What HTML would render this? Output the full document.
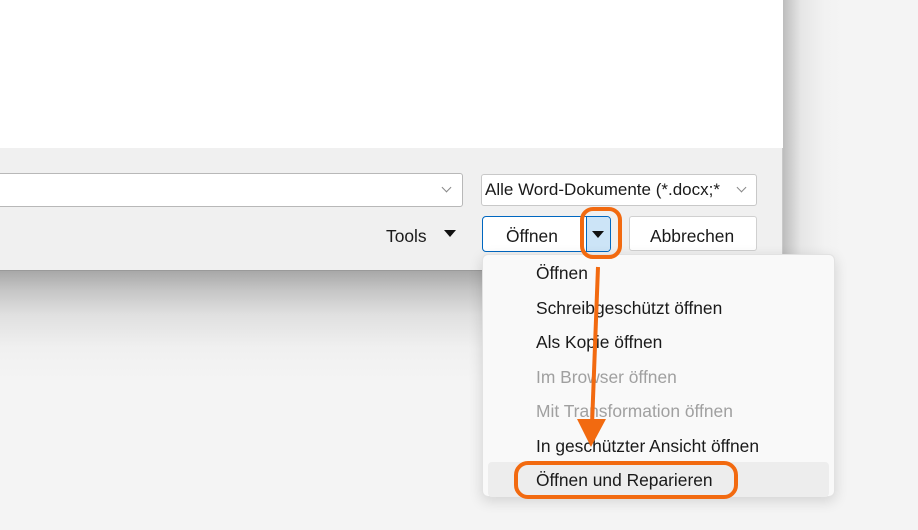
<!DOCTYPE html>
<html><head><meta charset="utf-8"><style>
*{margin:0;padding:0;box-sizing:border-box}
body{width:918px;height:530px;overflow:hidden;background:#f4f4f4;position:relative;font-family:"Liberation Sans",sans-serif;color:#1a1a1a}
.abs{position:absolute}
#shadowR{left:783px;top:0;width:60px;height:290px;background:linear-gradient(90deg,#bdbdbd,#e6e6e6 30%,#f2f2f2 70%,#f4f4f4)}
#shadowB{left:0;top:271px;width:800px;height:110px;background:linear-gradient(180deg,#a8a8a8,#c6c6c6 18%,#e0e0e0 40%,#f0f0f0 70%,#f4f4f4)}
#white{left:0;top:0;width:783px;height:148px;background:#fff}
#footer{left:0;top:148px;width:783px;height:123px;background:#f0f0f0;border-right:1px solid #c9c9c9;border-bottom:1px solid #9a9a9a}
.box{background:#fff;border:1px solid #c8c8c8;border-radius:3px}
.chev{position:absolute;width:7px;height:7px;border-right:1px solid #888;border-bottom:1px solid #888;transform:rotate(45deg)}
.tri{position:absolute;width:0;height:0;border-left:6px solid transparent;border-right:6px solid transparent;border-top:7px solid #111}
.t{position:absolute;font-size:17.4px;white-space:nowrap}
#menu{left:482px;top:254px;width:353px;height:243px;background:#f9f9f9;border:1px solid #e2e2e2;border-radius:6px;box-shadow:0 4px 14px rgba(0,0,0,.14)}
.mi{position:absolute;left:53px;font-size:17.4px;white-space:nowrap}
.dis{color:#a0a0a0}
</style></head><body>
<div class="abs" id="shadowB"></div>
<div class="abs" id="shadowR"></div>
<div class="abs" id="white"></div>
<div class="abs" id="footer"></div>
<div class="abs box" style="left:-4px;top:173px;width:467px;height:34px;border-color:#b8b8b8"><div class="chev" style="left:446px;top:10px"></div></div>
<div class="abs box" style="left:481px;top:174px;width:276px;height:32px"><span class="t" style="left:3px;top:5px;font-size:17px">Alle Word-Dokumente (*.docx;*</span><div class="chev" style="left:256px;top:9px"></div></div>
<span class="t" style="left:386px;top:226px">Tools</span>
<div class="tri" style="left:444px;top:230px"></div>
<div class="abs" style="left:482px;top:216px;width:129px;height:36px;border:1px solid #0067c0;border-radius:4px;background:#fff;overflow:hidden">
 <span class="t" style="left:23px;top:9px">Öffnen</span>
 <div class="abs" style="left:103px;top:0;width:25px;height:34px;background:#cce4f7;border-left:1px solid #0067c0"></div>
 <div class="tri" style="left:109px;top:14px"></div>
</div>
<div class="abs box" style="left:629px;top:216px;width:128px;height:35px;border-color:#d0d0d0"><span class="t" style="left:20px;top:9px">Abbrechen</span></div>
<div class="abs" id="menu">
 <div class="abs" style="left:5px;top:207px;width:341px;height:35px;background:#ededed;border-radius:4px"></div>
 <span class="mi" style="top:8px">Öffnen</span>
 <span class="mi" style="top:43px">Schreibgeschützt öffnen</span>
 <span class="mi" style="top:77px">Als Kopie öffnen</span>
 <span class="mi dis" style="top:112px">Im Browser öffnen</span>
 <span class="mi dis" style="top:146px">Mit Transformation öffnen</span>
 <span class="mi" style="top:181px">In geschützter Ansicht öffnen</span>
 <span class="mi" style="top:215px">Öffnen und Reparieren</span>
</div>
<svg class="abs" style="left:0;top:0" width="918" height="530">
 <rect x="582" y="209" width="38" height="48" rx="11" fill="none" stroke="#f26a10" stroke-width="4"/>
 <line x1="598" y1="267" x2="592" y2="425" stroke="#f26a10" stroke-width="4"/>
 <polygon points="577,419 606,419 591,447" fill="#f26a10"/>
 <rect x="516" y="463" width="220" height="34" rx="12" fill="none" stroke="#f26a10" stroke-width="4"/>
</svg>
</body></html>
